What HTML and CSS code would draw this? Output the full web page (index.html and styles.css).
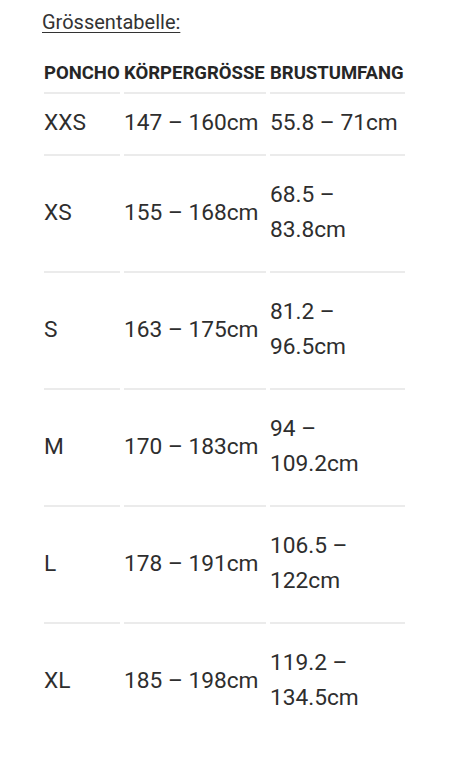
FILE: index.html
```html
<!DOCTYPE html>
<html lang="de">
<head>
<meta charset="utf-8">
<title>Grössentabelle</title>
<link rel="stylesheet" href="styles.css">
</head>
<body>
<div class="page">
  <p class="title">Grössentabelle:</p>
  <table class="sizes">
    <colgroup>
      <col class="c1">
      <col class="c2">
      <col class="c3">
    </colgroup>
    <thead>
      <tr>
        <th>PONCHO</th>
        <th>KÖRPERGRÖSSE</th>
        <th>BRUSTUMFANG</th>
      </tr>
    </thead>
    <tbody>
      <tr class="short">
        <td>XXS</td>
        <td>147 – 160cm</td>
        <td>55.8 – 71cm</td>
      </tr>
      <tr>
        <td>XS</td>
        <td>155 – 168cm</td>
        <td>68.5 – 83.8cm</td>
      </tr>
      <tr>
        <td>S</td>
        <td>163 – 175cm</td>
        <td>81.2 – 96.5cm</td>
      </tr>
      <tr>
        <td>M</td>
        <td>170 – 183cm</td>
        <td>94 – 109.2cm</td>
      </tr>
      <tr>
        <td>L</td>
        <td>178 – 191cm</td>
        <td>106.5 – 122cm</td>
      </tr>
      <tr class="last">
        <td>XL</td>
        <td>185 – 198cm</td>
        <td>119.2 – 134.5cm</td>
      </tr>
    </tbody>
  </table>
</div>
</body>
</html>
```

FILE: styles.css
```css
html, body {
  margin: 0;
  padding: 0;
  background: #ffffff;
}

body {
  font-family: Roboto, "Noto Sans", "Liberation Sans", sans-serif;
  color: #2e2e2e;
}

.page {
  padding-left: 40px;
}

.title {
  margin: 10px 0 0 2px;
  font-size: 20px;
  line-height: 24px;
  text-decoration: underline;
  text-decoration-thickness: 1px;
  text-underline-offset: 3px;
  color: #333333;
}

.sizes {
  margin-top: 19px;
  border-collapse: separate;
  border-spacing: 4px 0;
  table-layout: fixed;
  width: 369px;
}

.c1 { width: 76px; }
.c2 { width: 142px; }
.c3 { width: 135px; }

.sizes th {
  font-size: 18.5px;
  font-weight: 700;
  line-height: 24px;
  text-align: left;
  white-space: nowrap;
  padding: 8px 0 7px 0;
  border-bottom: 2px solid #ebebeb;
  color: #262626;
}

.sizes td {
  font-size: 22.7px;
  line-height: 35px;
  padding: 21px 0 24px 0;
  vertical-align: middle;
  border-bottom: 2px solid #ebebeb;
}

.sizes tr.short td {
  padding: 11px 0 14px 0;
}

.sizes tr.last td {
  border-bottom: none;
}
```
